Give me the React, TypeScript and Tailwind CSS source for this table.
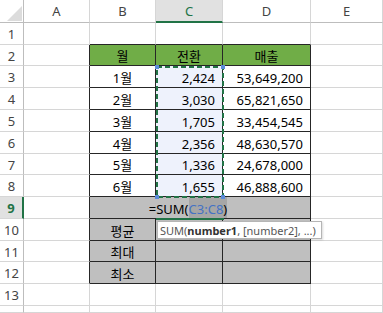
import React from "react";

const data: [string, string, string][] = [
  ["1월", "2,424", "53,649,200"],
  ["2월", "3,030", "65,821,650"],
  ["3월", "1,705", "33,454,545"],
  ["4월", "2,356", "48,630,570"],
  ["5월", "1,336", "24,678,000"],
  ["6월", "1,655", "46,888,600"],
];

const stats = ["평균", "최대", "최소"];

// border colour helpers, written out in full so tailwind picks them up
const edge = (darkRight: boolean, darkBottom: boolean) =>
  `border-r border-b ${darkRight ? "border-r-[#262626]" : "border-r-[#d6d6d6]"} ${
    darkBottom ? "border-b-[#262626]" : "border-b-[#d6d6d6]"
  }`;

const ColHeader: React.FC<{ label: string; active?: boolean }> = ({ label, active }) => (
  <div
    className={`flex items-center justify-center pt-[1px] border-r border-r-[#d6d6d6] ${
      active
        ? "bg-[#e1e1e1] border-b-2 border-b-[#217346] text-[#217346]"
        : "bg-white border-b border-b-[#bdbdbd] text-[#444]"
    }`}
  >
    {label}
  </div>
);

const RowHeader: React.FC<{ n: number }> = ({ n }) =>
  n === 9 ? (
    <div className="flex items-center justify-center pt-[2px] bg-[#e1e1e1] border-r-2 border-r-[#217346] border-b border-b-[#d6d6d6] font-bold text-[#217346]">
      {n}
    </div>
  ) : (
    <div className="flex items-center justify-center pt-[2px] border-r border-r-[#bdbdbd] border-b border-b-[#d6d6d6] text-[#444]">
      {n > 13 ? "" : n}
    </div>
  );

export default function App() {
  const rows: React.ReactNode[] = [];

  for (let r = 1; r <= 14; r++) {
    const inTable = r >= 2 && r <= 12;
    rows.push(<RowHeader key={`h${r}`} n={r} />);
    rows.push(<div key={`a${r}`} className={edge(inTable, false)} />);

    if (r === 1 || r >= 13) {
      rows.push(<div key={`b${r}`} className={edge(false, r === 1)} />);
      rows.push(<div key={`c${r}`} className={edge(false, r === 1)} />);
      rows.push(<div key={`d${r}`} className={edge(false, r === 1)} />);
    } else if (r === 2) {
      ["월", "전환", "매출"].map((t) =>
        rows.push(
          <div key={`${t}`} className={`${edge(true, true)} bg-[#70ad47] flex items-center justify-center pt-[2px]`}>
            {t}
          </div>
        )
      );
    } else if (r <= 8) {
      const [m, conv, sales] = data[r - 3];
      rows.push(
        <div key={`b${r}`} className={`${edge(true, true)} flex items-center justify-center pt-[3px]`}>
          {m}
        </div>
      );
      rows.push(
        <div key={`c${r}`} className={`${edge(true, true)} bg-[#eef2fc] flex items-center justify-end pr-[7px] pt-[3px]`}>
          {conv}
        </div>
      );
      rows.push(
        <div key={`d${r}`} className={`${edge(true, true)} flex items-center justify-end pr-[7px] pt-[3px]`}>
          {sales}
        </div>
      );
    } else if (r === 9) {
      rows.push(
        <div key="formula" className={`${edge(true, true)} col-span-3 bg-[#bfbfbf] flex items-stretch justify-center pr-[24px]`}>
          <span className="flex items-center pt-[3px]">=SUM(</span>
          <span className="flex items-center pt-[3px] bg-[#a6a6a6]">
            <span className="text-[#4472c4]">C3:C8</span>)
          </span>
        </div>
      );
    } else {
      rows.push(
        <div key={`b${r}`} className={`${edge(true, true)} bg-[#bfbfbf] flex items-center justify-center pt-[3px]`}>
          {stats[r - 10]}
        </div>
      );
      rows.push(
        <div key={`c${r}`} className={`${edge(true, true)} bg-[#bfbfbf] relative`}>
          {r === 10 && (
            <div className="absolute z-10 left-[1px] top-[2px] w-[165px] h-[18px] bg-white border border-[#b5b5b5] shadow-[1px_1px_2px_rgba(0,0,0,0.15)] flex items-center pl-[2px] text-[11px] text-[#555] whitespace-nowrap">
              SUM(<span className="font-bold text-[#333]">number1</span>, [number2], ...)
            </div>
          )}
        </div>
      );
      rows.push(<div key={`d${r}`} className={`${edge(true, true)} bg-[#bfbfbf]`} />);
    }

    rows.push(<div key={`e${r}`} className={edge(false, false)} />);
  }

  return (
    <div className="w-[383px] h-[313px] overflow-hidden bg-white text-[13px] leading-none text-black font-['Noto_Sans','Noto_Sans_CJK_KR',sans-serif]">
      <div className="relative grid grid-cols-[24px_66px_66px_67px_88px_72px] grid-rows-[23px_22px_21px_22px_22px_22px_22px_21px_22px_22px_22px_21px_22px_22px_7px]">
        <div className="relative border-r border-r-[#bdbdbd] border-b border-b-[#bdbdbd]">
          <svg className="absolute left-0 top-0" width="24" height="23" viewBox="0 0 24 23">
            <polygon points="22,6 22,21 7,21" fill="#dcdcdc" />
          </svg>
        </div>
        <ColHeader label="A" />
        <ColHeader label="B" />
        <ColHeader label="C" active />
        <ColHeader label="D" />
        <ColHeader label="E" />
        {rows}

        {/* copy range C3:C8 */}
        <div className="absolute col-start-4 col-end-5 row-start-4 row-end-10 left-0 top-0 -right-px -bottom-px pointer-events-none">
          <svg className="absolute inset-0" width="68" height="132">
            <rect x="1" y="1" width="66" height="130" fill="none" stroke="#217346" strokeWidth="2" strokeDasharray="5 3" />
          </svg>
          <div className="absolute -left-[1px] -top-[1px] w-[4px] h-[4px] bg-[#5b8bd9]" />
          <div className="absolute -right-[1px] -top-[1px] w-[4px] h-[4px] bg-[#5b8bd9]" />
          <div className="absolute -left-[1px] -bottom-[1px] w-[4px] h-[4px] bg-[#5b8bd9]" />
          <div className="absolute -right-[1px] -bottom-[1px] w-[4px] h-[4px] bg-[#5b8bd9]" />
        </div>

        {/* active cell underline in row 9 */}
        <div className="absolute col-start-4 col-end-5 row-start-10 row-end-11 left-0 -right-px bottom-[-1px] h-[2px] bg-[#217346]" />
      </div>
    </div>
  );
}
